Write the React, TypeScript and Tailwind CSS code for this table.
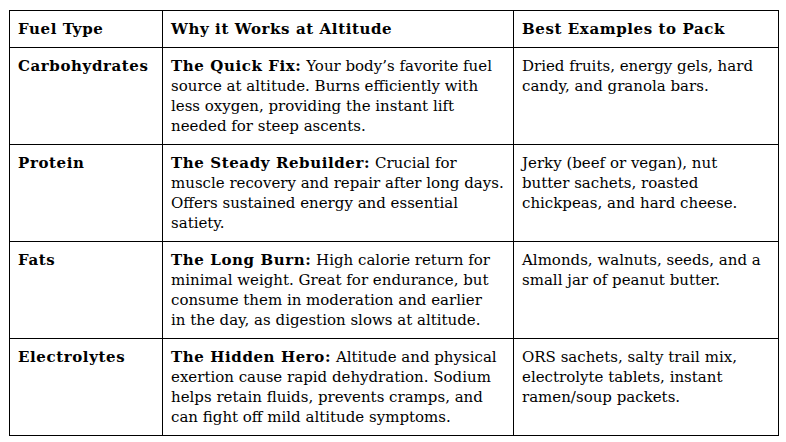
import React from "react";

type Row = { type: string; title: string; why: string[]; ex: string[] };

const rows: Row[] = [
  {
    type: "Carbohydrates",
    title: "The Quick Fix:",
    why: [
      " Your body’s favorite fuel",
      "source at altitude. Burns efficiently with",
      "less oxygen, providing the instant lift",
      "needed for steep ascents.",
    ],
    ex: ["Dried fruits, energy gels, hard", "candy, and granola bars."],
  },
  {
    type: "Protein",
    title: "The Steady Rebuilder:",
    why: [
      " Crucial for",
      "muscle recovery and repair after long days.",
      "Offers sustained energy and essential",
      "satiety.",
    ],
    ex: ["Jerky (beef or vegan), nut", "butter sachets, roasted", "chickpeas, and hard cheese."],
  },
  {
    type: "Fats",
    title: "The Long Burn:",
    why: [
      " High calorie return for",
      "minimal weight. Great for endurance, but",
      "consume them in moderation and earlier",
      "in the day, as digestion slows at altitude.",
    ],
    ex: ["Almonds, walnuts, seeds, and a", "small jar of peanut butter."],
  },
  {
    type: "Electrolytes",
    title: "The Hidden Hero:",
    why: [
      " Altitude and physical",
      "exertion cause rapid dehydration. Sodium",
      "helps retain fluids, prevents cramps, and",
      "can fight off mild altitude symptoms.",
    ],
    ex: ["ORS sachets, salty trail mix,", "electrolyte tablets, instant", "ramen/soup packets."],
  },
];

function Lines({ lines }: { lines: string[] }) {
  return (
    <>
      {lines.map((l, i) => (
        <React.Fragment key={i}>
          {i > 0 && <br />}
          {l}
        </React.Fragment>
      ))}
    </>
  );
}

const cell = "border border-black px-2 py-2 align-top text-left";

export default function App() {
  return (
    <div className="min-h-[442px] w-[786px] bg-white pl-[9px] pt-[10px] font-['DejaVu_Serif',serif] text-[15px] leading-5 text-black">
      <table className="w-[769px] table-fixed border-collapse">
        <colgroup>
          <col className="w-[153px]" />
          <col className="w-[351px]" />
          <col className="w-[265px]" />
        </colgroup>
        <thead>
          <tr>
            <th className={`${cell} font-bold tracking-[0.6px]`}>Fuel Type</th>
            <th className={`${cell} font-bold tracking-[0.6px]`}>Why it Works at Altitude</th>
            <th className={`${cell} font-bold tracking-[0.6px]`}>Best Examples to Pack</th>
          </tr>
        </thead>
        <tbody>
          {rows.map((r) => (
            <tr key={r.type}>
              <td className={`${cell} font-bold tracking-[0.6px]`}>{r.type}</td>
              <td className={cell}>
                <span className="font-bold tracking-[0.6px]">{r.title}</span>
                <Lines lines={r.why} />
              </td>
              <td className={cell}>
                <Lines lines={r.ex} />
              </td>
            </tr>
          ))}
        </tbody>
      </table>
    </div>
  );
}
